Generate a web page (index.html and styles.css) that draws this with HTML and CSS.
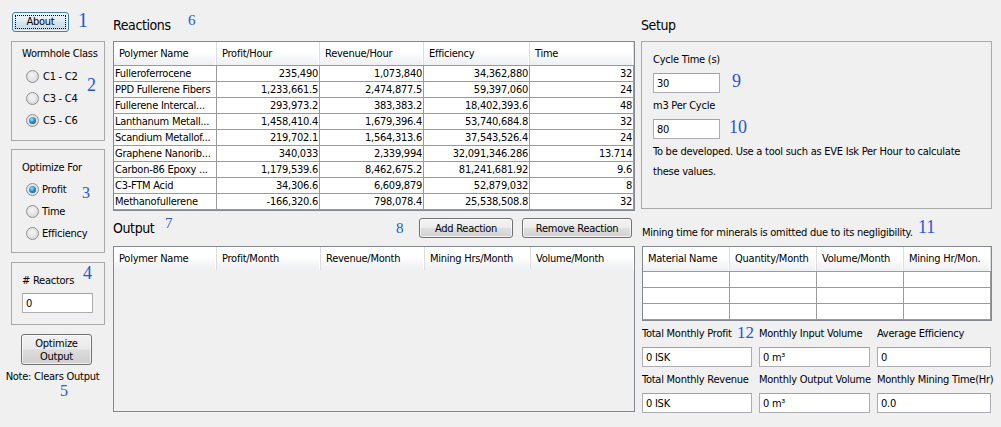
FILE: index.html
```html
<!DOCTYPE html>
<html lang="en">
<head>
<meta charset="utf-8">
<title>Reaction Planner</title>
<link rel="stylesheet" href="styles.css">
</head>
<body>
<div class="app">
  <aside class="left">
    <button class="btn btn-about"><span class="focus">About</span></button>
    <div class="group g-worm">
      <div class="group-title">Wormhole Class</div>
      <div class="radios">
        <div class="radio"><span class="rb"></span>C1 - C2</div>
        <div class="radio"><span class="rb"></span>C3 - C4</div>
        <div class="radio"><span class="rb on"></span>C5 - C6</div>
      </div>
    </div>
    <div class="group g-opt">
      <div class="group-title">Optimize For</div>
      <div class="radios">
        <div class="radio"><span class="rb on"></span>Profit</div>
        <div class="radio"><span class="rb"></span>Time</div>
        <div class="radio"><span class="rb"></span>Efficiency</div>
      </div>
    </div>
    <div class="group g-react">
      <div class="group-title"># Reactors</div>
      <input class="field w-react" value="0" readonly>
    </div>
    <button class="btn btn-optimize">Optimize<br>Output</button>
    <div class="note">Note: Clears Output</div>
  </aside>

  <main class="mid">
    <h2 class="heading">Reactions</h2>
    <div class="frame f-reactions">
      <table class="grid">
        <colgroup><col class="c1"><col class="c2"><col class="c3"><col class="c4"><col class="c5"></colgroup>
        <thead>
          <tr><th>Polymer Name</th><th>Profit/Hour</th><th>Revenue/Hour</th><th>Efficiency</th><th>Time</th></tr>
        </thead>
        <tbody>
          <tr><td>Fulleroferrocene</td><td class="n">235,490</td><td class="n">1,073,840</td><td class="n">34,362,880</td><td class="n">32</td></tr>
          <tr><td>PPD Fullerene Fibers</td><td class="n">1,233,661.5</td><td class="n">2,474,877.5</td><td class="n">59,397,060</td><td class="n">24</td></tr>
          <tr><td>Fullerene Intercal...</td><td class="n">293,973.2</td><td class="n">383,383.2</td><td class="n">18,402,393.6</td><td class="n">48</td></tr>
          <tr><td>Lanthanum Metall...</td><td class="n">1,458,410.4</td><td class="n">1,679,396.4</td><td class="n">53,740,684.8</td><td class="n">32</td></tr>
          <tr><td>Scandium Metallof...</td><td class="n">219,702.1</td><td class="n">1,564,313.6</td><td class="n">37,543,526.4</td><td class="n">24</td></tr>
          <tr><td>Graphene Nanorib...</td><td class="n">340,033</td><td class="n">2,339,994</td><td class="n">32,091,346.286</td><td class="n">13.714</td></tr>
          <tr><td>Carbon-86 Epoxy ...</td><td class="n">1,179,539.6</td><td class="n">8,462,675.2</td><td class="n">81,241,681.92</td><td class="n">9.6</td></tr>
          <tr><td>C3-FTM Acid</td><td class="n">34,306.6</td><td class="n">6,609,879</td><td class="n">52,879,032</td><td class="n">8</td></tr>
          <tr><td>Methanofullerene</td><td class="n">-166,320.6</td><td class="n">798,078.4</td><td class="n">25,538,508.8</td><td class="n">32</td></tr>
        </tbody>
      </table>
    </div>

    <div class="out-bar">
      <h2 class="heading">Output</h2>
      <div class="actions">
        <button class="btn btn-add">Add Reaction</button>
        <button class="btn btn-remove">Remove Reaction</button>
      </div>
    </div>
    <div class="frame f-output">
      <table class="grid">
        <colgroup><col class="c1"><col class="c2o"><col class="c3o"><col class="c4o"><col class="c5"></colgroup>
        <thead>
          <tr><th>Polymer Name</th><th>Profit/Month</th><th>Revenue/Month</th><th>Mining Hrs/Month</th><th>Volume/Month</th></tr>
        </thead>
      </table>
    </div>
  </main>

  <section class="right">
    <h2 class="heading">Setup</h2>
    <div class="setup">
      <div class="lbl">Cycle Time (s)</div>
      <input class="field w-setup" value="30" readonly>
      <div class="lbl">m3 Per Cycle</div>
      <input class="field w-setup" value="80" readonly>
      <p class="info">To be developed. Use a tool such as EVE Isk Per Hour to calculate these values.</p>
    </div>
    <div class="mining-note">Mining time for minerals is omitted due to its negligibility.</div>
    <div class="frame f-materials">
      <table class="grid mat">
        <colgroup><col class="m"><col class="m"><col class="m"><col class="m"></colgroup>
        <thead>
          <tr><th>Material Name</th><th>Quantity/Month</th><th>Volume/Month</th><th>Mining Hr/Mon.</th></tr>
        </thead>
        <tbody>
          <tr><td></td><td></td><td></td><td></td></tr>
          <tr><td></td><td></td><td></td><td></td></tr>
          <tr><td></td><td></td><td></td><td></td></tr>
        </tbody>
      </table>
    </div>
    <div class="totals">
      <div class="lbl">Total Monthly Profit</div>
      <div class="lbl">Monthly Input Volume</div>
      <div class="lbl">Average Efficiency</div>
      <input class="field" value="0 ISK" readonly>
      <input class="field" value="0 m³" readonly>
      <input class="field" value="0" readonly>
      <div class="lbl">Total Monthly Revenue</div>
      <div class="lbl">Monthly Output Volume</div>
      <div class="lbl">Monthly Mining Time(Hr)</div>
      <input class="field" value="0 ISK" readonly>
      <input class="field" value="0 m³" readonly>
      <input class="field" value="0.0" readonly>
    </div>
  </section>
</div>

<div class="marks">
  <span class="mk mk1">1</span>
  <span class="mk mk2">2</span>
  <span class="mk mk3">3</span>
  <span class="mk mk4">4</span>
  <span class="mk mk5">5</span>
  <span class="mk mk6">6</span>
  <span class="mk mk7">7</span>
  <span class="mk mk8">8</span>
  <span class="mk mk9">9</span>
  <span class="mk mk10">10</span>
  <span class="mk mk11">11</span>
  <span class="mk mk12">12</span>
</div>
</body>
</html>
```

FILE: styles.css
```css
* { box-sizing: border-box; }
html, body { margin: 0; padding: 0; }
body {
  background: #f0f0f0;
  font: 11px "DejaVu Sans Condensed", "Liberation Sans", sans-serif;
  letter-spacing: -0.25px;
  color: #000;
  width: 1001px;
  height: 427px;
  overflow: hidden;
  position: relative;
}

.app { display: flex; padding-left: 11px; }

/* ---------- left column ---------- */
.left { width: 94px; margin-right: 8px; padding-top: 12px; display: flex; flex-direction: column; align-items: flex-start; }

.btn {
  font: inherit;
  letter-spacing: inherit;
  color: #000;
  border: 1px solid #707070;
  border-radius: 3px;
  background: linear-gradient(#f3f3f3 0%, #ececec 48%, #dedede 52%, #d2d2d2 100%);
  box-shadow: inset 0 0 0 1px rgba(255,255,255,0.7);
  padding: 0;
  cursor: default;
}
.btn-about {
  margin-left: 1px;
  width: 57px;
  height: 20px;
  border-color: #3c7fb1;
  background: linear-gradient(#edf4f9 0%, #e0ebf3 48%, #d2e3ef 52%, #c8dcea 100%);
  position: relative;
  padding: 2px;
}
.btn-about .focus {
  display: block;
  height: 14px;
  line-height: 12px;
  border: 1px dotted #000;
}

.group { border: 1px solid #a9a9a9; width: 94px; }
.group-title { line-height: 14px; white-space: nowrap; }
.g-worm { margin-top: 9px; height: 100px; padding: 5px 0 0 10px; }
.g-opt { margin-top: 8px; height: 104px; padding: 11px 0 0 10px; }
.g-react { margin-top: 9px; height: 63px; padding: 11px 0 0 10px; }
.g-worm .radios { margin-top: 4px; }
.g-opt .radios { margin-top: 3px; }
.radio { height: 22px; display: flex; align-items: center; gap: 4px; padding-left: 4px; }
.g-opt .radio { gap: 3px; }

.rb {
  flex: none;
  width: 13px;
  height: 13px;
  border-radius: 50%;
  border: 1px solid #8e8f8f;
  background: radial-gradient(circle at 45% 40%, #f6f6f6 0%, #e6e6e6 45%, #cdcdcd 100%);
  position: relative;
}
.rb.on::after {
  content: "";
  position: absolute;
  left: 2px;
  top: 2px;
  width: 7px;
  height: 7px;
  border-radius: 50%;
  background: radial-gradient(circle at 40% 35%, #9be4ff 0%, #2b8fd6 45%, #0b3b73 100%);
}

.field {
  font: inherit;
  letter-spacing: inherit;
  color: #000;
  height: 20px;
  border: 1px solid #abadb3;
  border-top-color: #a0a2a8;
  background: #fff;
  padding: 0 3px;
  margin: 0;
  outline: none;
  display: block;
}
.w-react { width: 71px; margin-top: 5px; }

.btn-optimize {
  margin-top: 9px;
  margin-left: 10px;
  width: 71px;
  height: 31px;
  line-height: 13px;
  background: linear-gradient(#f1f1f1 0%, #eaeaea 48%, #dbdbdb 52%, #cfcfcf 100%);
}
.note {
  margin-top: 5px;
  margin-left: -11px;
  width: 105px;
  text-align: center;
  line-height: 14px;
  white-space: nowrap;
}

/* ---------- middle column ---------- */
.mid { width: 522px; margin-right: 6px; padding-top: 15px; }
.heading {
  margin: 0 0 6px 0;
  font-size: 14px;
  font-weight: normal;
  letter-spacing: -0.4px;
  height: 20px;
  line-height: 20px;
}

.frame {
  border: 1px solid #828790;
  background: #f0f0f0;
  overflow: hidden;
}
.f-reactions { height: 170px; }
.f-output { height: 166px; }

.grid { border-collapse: separate; border-spacing: 0; table-layout: fixed; width: 520px; }
.grid col.c1 { width: 103px; }
.grid col.c2 { width: 103px; }
.grid col.c3 { width: 104px; }
.grid col.c4 { width: 106px; }
.grid col.c5 { width: 104px; }
.grid col.c2o { width: 104px; }
.grid col.c3o { width: 104px; }
.grid col.c4o { width: 106px; }

.grid th {
  font-weight: normal;
  text-align: left;
  padding: 0 0 0 5px;
  height: 23px;
  line-height: 23px;
  white-space: nowrap;
  overflow: hidden;
  background: linear-gradient(#ffffff 0%, #ffffff 45%, #f4f5f7 75%, #eef0f3 100%);
  border-right: 1px solid #dcdde0;
  box-shadow: inset -1px 0 0 #fff;
}
.grid td {
  background: #fff;
  line-height: 15px;
  height: 16px;
  padding: 0 1px;
  white-space: nowrap;
  overflow: hidden;
  border-right: 1px solid #9a9a9a;
  border-bottom: 1px solid #9a9a9a;
}
.grid tbody tr:first-child td { border-top: 1px solid #9a9a9a; height: 17px; }
.grid td.n { text-align: right; }

.out-bar {
  margin-top: 7px;
  margin-bottom: 8px;
  height: 20px;
  display: flex;
  align-items: center;
  justify-content: space-between;
}
.out-bar .heading { margin: 0; }
.actions { display: flex; gap: 9px; margin-right: 3px; }
.btn-add { width: 94px; height: 20px; }
.btn-remove { width: 110px; height: 20px; }

/* ---------- right column ---------- */
.right { width: 351px; padding-top: 15px; }
.setup {
  border: 1px solid #a9a9a9;
  height: 168px;
  padding: 8px 11px;
  display: flex;
  flex-direction: column;
  align-items: flex-start;
  gap: 3px;
}
.lbl { line-height: 20px; white-space: nowrap; }
.w-setup { width: 67px; }
.info { margin: 0; line-height: 20px; width: 322px; }

.mining-note { margin: 14px 0 3px 1px; line-height: 20px; white-space: nowrap; }
.f-materials { margin-left: 1px; width: 350px; height: 75px; }
.grid.mat { width: 348px; }
.grid.mat col.m { width: 87px; }
.grid.mat th { height: 24px; line-height: 24px; }

.totals {
  margin: 3px 0 0 1px;
  display: grid;
  grid-template-columns: 110px 111px 114px;
  column-gap: 7px;
  row-gap: 3px;
  grid-auto-rows: 20px;
}
.totals .field { width: 100%; }

/* ---------- annotation marks ---------- */
.marks { position: absolute; left: 0; top: 0; width: 0; height: 0; }
.mk {
  position: absolute;
  font-family: "Liberation Serif", serif;
  letter-spacing: 0;
  color: #2457d8;
  line-height: 1;
}
.mk1 { left: 78px; top: 10px; font-size: 20px; }
.mk2 { left: 87px; top: 76px; font-size: 18px; }
.mk3 { left: 82px; top: 185px; font-size: 16px; }
.mk4 { left: 83px; top: 264px; font-size: 18px; }
.mk5 { left: 60px; top: 383px; font-size: 16px; }
.mk6 { left: 188px; top: 13px; font-size: 15px; }
.mk7 { left: 165px; top: 216px; font-size: 15px; }
.mk8 { left: 396px; top: 221px; font-size: 15px; }
.mk9 { left: 732px; top: 72px; font-size: 18px; }
.mk10 { left: 729px; top: 118px; font-size: 18px; }
.mk11 { left: 918px; top: 218px; font-size: 18px; }
.mk12 { left: 737px; top: 324px; font-size: 17px; }
```
